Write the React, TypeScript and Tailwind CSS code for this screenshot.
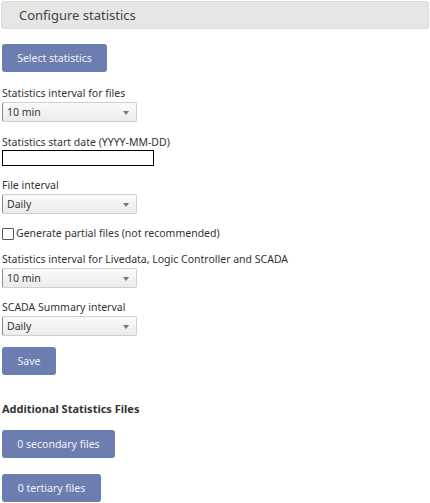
import { useState } from "react";

const FONT = "font-['Noto_Sans',sans-serif]";

function Select({ options, value }: { options: string[]; value: string }) {
    const [v, setV] = useState(value);
    return (
        <div className="relative w-[135px] h-[20px]">
            <select
                value={v}
                onChange={(e) => setV(e.target.value)}
                className="appearance-none w-full h-full rounded-[2px] border border-[#cfcfcf] border-l-[#8a8a8a] bg-gradient-to-b from-[#fbfbfb] to-[#ebebeb] pl-[4px] pt-[1px] text-[10.5px] text-[#333] outline-none"
            >
                {options.map((o) => (
                    <option key={o}>{o}</option>
                ))}
            </select>
            {/* arrow */}
            <span className="pointer-events-none absolute right-[8px] top-[9px] w-0 h-0 border-l-[3px] border-r-[3px] border-t-[4px] border-l-transparent border-r-transparent border-t-[#777]" />
        </div>
    );
}

function Button({ children, className = "" }: { children: React.ReactNode; className?: string }) {
    return (
        <button
            className={`h-[28px] rounded-[3px] bg-[#6c7eb0] text-[10.5px] text-[#eef1f8] ${className}`}
        >
            {children}
        </button>
    );
}

const INTERVALS = ["1 min", "5 min", "10 min", "15 min", "30 min", "60 min"];
const PERIODS = ["Hourly", "Daily", "Weekly", "Monthly"];

export default function App() {
    return (
        <div className={`${FONT} p-[1px] text-[#333] text-[10.5px] leading-[15px]`}>
            <div className="h-[28px] rounded-[3px] border border-[#dcddd9] bg-[#e6e7e4] pl-[17px] flex items-center text-[13px] text-[#444]">
                Configure statistics
            </div>

            <div className="pl-[1px] flex flex-col items-start">
                <Button className="mt-[15px] w-[105px]">Select statistics</Button>

                <label className="mt-[14px] block">Statistics interval for files</label>
                <div className="mt-[1px]">
                    <Select options={INTERVALS} value="10 min" />
                </div>

                <label className="mt-[13px] block">Statistics start date (YYYY-MM-DD)</label>
                <input className="w-[152px] h-[16px] border border-black bg-white outline-none" />

                <label className="mt-[12px] block">File interval</label>
                <div className="mt-[1px]">
                    <Select options={PERIODS} value="Daily" />
                </div>

                <label className="mt-[12px] flex items-center gap-[2px] h-[15px]">
                    <input type="checkbox" className="appearance-none w-[12px] h-[12px] border border-[#555] rounded-[1px] bg-white" />
                    Generate partial files (not recommended)
                </label>

                <label className="mt-[11px] block">Statistics interval for Livedata, Logic Controller and SCADA</label>
                <div className="mt-[1px]">
                    <Select options={INTERVALS} value="10 min" />
                </div>

                <label className="mt-[12px] block">SCADA Summary interval</label>
                <div className="mt-[1px]">
                    <Select options={PERIODS} value="Daily" />
                </div>

                <Button className="mt-[11px] w-[54px] h-[27px]">Save</Button>

                <h3 className="mt-[26px] text-[11px] font-bold leading-[16px] text-[#333]">Additional Statistics Files</h3>

                <Button className="mt-[13px] w-[113px] h-[27px]">0 secondary files</Button>
                <Button className="mt-[16px] w-[99px] h-[27px]">0 tertiary files</Button>
            </div>
        </div>
    );
}
